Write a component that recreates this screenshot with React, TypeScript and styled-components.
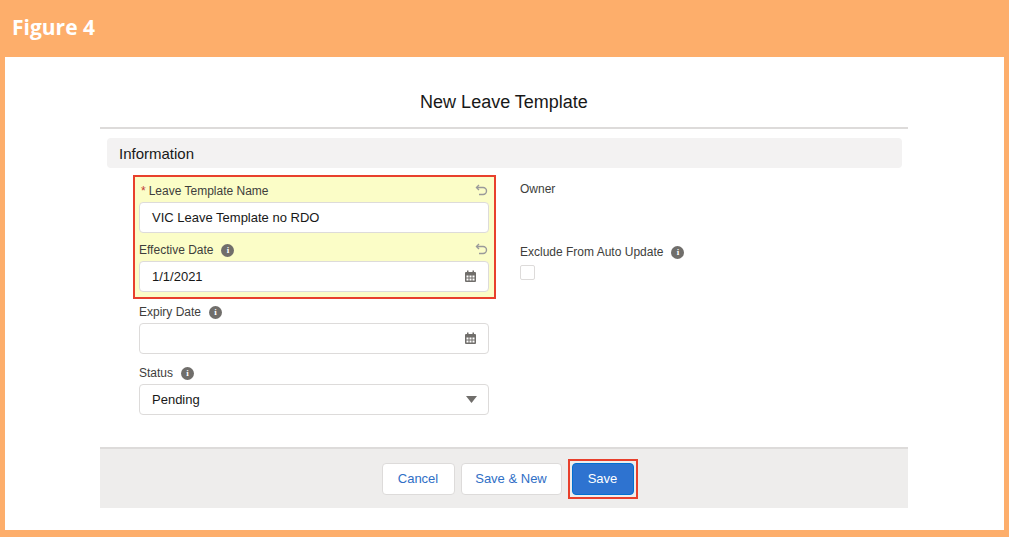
import React from "react";
import styled, { createGlobalStyle } from "styled-components";

const G = createGlobalStyle`
  body { margin: 0; font-family: "Helvetica Neue", Arial, "Liberation Sans", sans-serif; }
  * { box-sizing: border-box; }
`;
const Frame = styled.div`
  width: 1009px; height: 537px; background: #fdae6b;
  padding: 0 5px 7px 5px; display: flex; flex-direction: column;
`;
const Header = styled.div`
  height: 57px; display: flex; align-items: center; padding-left: 7px;
  color: #fff; font-family: "Open Sans", sans-serif; font-weight: 700; font-size: 21px;
  padding-bottom: 4px;
`;
const Inner = styled.div`
  flex: 1; background: #fff; padding: 0 96px 0 95px; display: flex; flex-direction: column;
`;
const Title = styled.div`
  text-align: center; font-size: 18px; color: #181818; height: 72px; line-height: 1;
  padding-top: 36px; border-bottom: 2px solid #dddbda; font-family: Arial, "Liberation Sans", sans-serif;
`;
const Section = styled.div`
  margin: 9px 6px 0 7px; height: 30px; background: #f3f2f2; border-radius: 4px;
  display: flex; align-items: center; padding-left: 12px; font-size: 15px; color: #181818;
  font-family: Arial, "Liberation Sans", sans-serif;
`;
const Body = styled.div`
  display: flex; padding: 7px 0 0 33px; gap: 24px; height: 279px;
  font-family: Arial, "Liberation Sans", sans-serif;
`;
const LeftCol = styled.div` width: 363px; display: flex; flex-direction: column; `;
const Highlight = styled.div`
  border: 2px solid #e8402c; background: #fbfdc7; padding: 3px 5px 5px 4px; display: flex; flex-direction: column; gap: 0;
`;
const Field = styled.div<{ $pad?: boolean }>`
  display: flex; flex-direction: column; ${p => p.$pad ? "padding: 0 7px 0 6px;" : ""} margin-bottom: 8px;
`;
const LabelRow = styled.div`
  display: flex; align-items: center; height: 22px; font-size: 12px; color: #3e3e3c; gap: 8px;
`;
const Req = styled.span` color: #c23934; margin-right: -5px; `;
const Undo = styled.span` margin-left: auto; color: #999; font-size: 14px; `;
const Info = styled.span`
  width: 13px; height: 13px; border-radius: 50%; background: #706e6b; color: #fff;
  font-size: 9px; font-weight: 700; display: inline-flex; align-items: center; justify-content: center;
  font-family: Georgia, serif;
`;
const Input = styled.div`
  height: 31px; border: 1px solid #dddbda; border-radius: 4px; background: #fff;
  display: flex; align-items: center; padding: 0 11px 0 12px; font-size: 13px; color: #181818;
`;
const RightIcon = styled.span` margin-left: auto; display: flex; `;
const RightCol = styled.div` flex: 1; display: flex; flex-direction: column; `;
const Check = styled.div`
  width: 15px; height: 15px; border: 1px solid #dddbda; border-radius: 2px; margin-top: 2px;
`;
const Footer = styled.div`
  height: 61px; background: #eeedec; border-top: 2px solid #dddbda; display: flex;
  justify-content: center; align-items: center; gap: 6px; padding-left: 11px;
  font-family: Arial, "Liberation Sans", sans-serif;
`;
const Btn = styled.button<{ $w: number; $brand?: boolean }>`
  width: ${p => p.$w}px; height: 32px; border-radius: 4px; font-size: 13px; font-family: inherit;
  border: 1px solid ${p => p.$brand ? "#0070d2" : "#dddbda"};
  background: ${p => p.$brand ? "#2e73d0" : "#fff"}; color: ${p => p.$brand ? "#fff" : "#2f6fc6"};
`;
const SaveWrap = styled.div` border: 2px solid #e8402c; padding: 2px; display: flex; `;

const Cal = () => (
  <svg width="13" height="13" viewBox="0 0 13 13"><rect x="1" y="2" width="11" height="10" rx="1" fill="#706e6b"/><rect x="3" y="0.5" width="1.5" height="3" fill="#706e6b"/><rect x="8.5" y="0.5" width="1.5" height="3" fill="#706e6b"/>
  {[5.5, 8.5].map(y => [2.5, 5.5, 8.5].map(x => <rect key={x + "" + y} x={x} y={y} width="2" height="2" fill="#fff"/>))}</svg>
);
const UndoIcon = () => (
  <svg width="14" height="13" viewBox="0 0 14 13"><path d="M4 2 L1.5 4.5 L4 7" fill="none" stroke="#9a9a9a" strokeWidth="1.4"/><path d="M1.8 4.5 H8 a3.5 3.5 0 0 1 0 7 H4" fill="none" stroke="#9a9a9a" strokeWidth="1.4"/></svg>
);

export default function App() {
  return (
    <Frame>
      <G />
      <Header>Figure 4</Header>
      <Inner>
        <Title>New Leave Template</Title>
        <Section>Information</Section>
        <Body>
          <LeftCol>
            <Highlight>
              <Field $pad={false} style={{ marginBottom: 6 }}>
                <LabelRow style={{ paddingLeft: 2 }}><Req>*</Req>Leave Template Name<Undo><UndoIcon /></Undo></LabelRow>
                <Input>VIC Leave Template no RDO</Input>
              </Field>
              <Field style={{ marginBottom: 0 }}>
                <LabelRow>Effective Date<Info>i</Info><Undo><UndoIcon /></Undo></LabelRow>
                <Input>1/1/2021<RightIcon><Cal /></RightIcon></Input>
              </Field>
            </Highlight>
            <Field $pad style={{ marginTop: 2 }}>
              <LabelRow>Expiry Date<Info>i</Info></LabelRow>
              <Input><RightIcon><Cal /></RightIcon></Input>
            </Field>
            <Field $pad>
              <LabelRow>Status<Info>i</Info></LabelRow>
              <Input>Pending<RightIcon><svg width="11" height="8" viewBox="0 0 11 8"><path d="M0 0 H11 L5.5 7z" fill="#706e6b"/></svg></RightIcon></Input>
            </Field>
          </LeftCol>
          <RightCol>
            <LabelRow style={{ marginTop: 3 }}>Owner</LabelRow>
            <LabelRow style={{ marginTop: 41 }}>Exclude From Auto Update<Info>i</Info></LabelRow>
            <Check />
          </RightCol>
        </Body>
        <Footer>
          <Btn $w={73}>Cancel</Btn>
          <Btn $w={101}>Save &amp; New</Btn>
          <SaveWrap><Btn $w={62} $brand>Save</Btn></SaveWrap>
        </Footer>
      </Inner>
    </Frame>
  );
}
